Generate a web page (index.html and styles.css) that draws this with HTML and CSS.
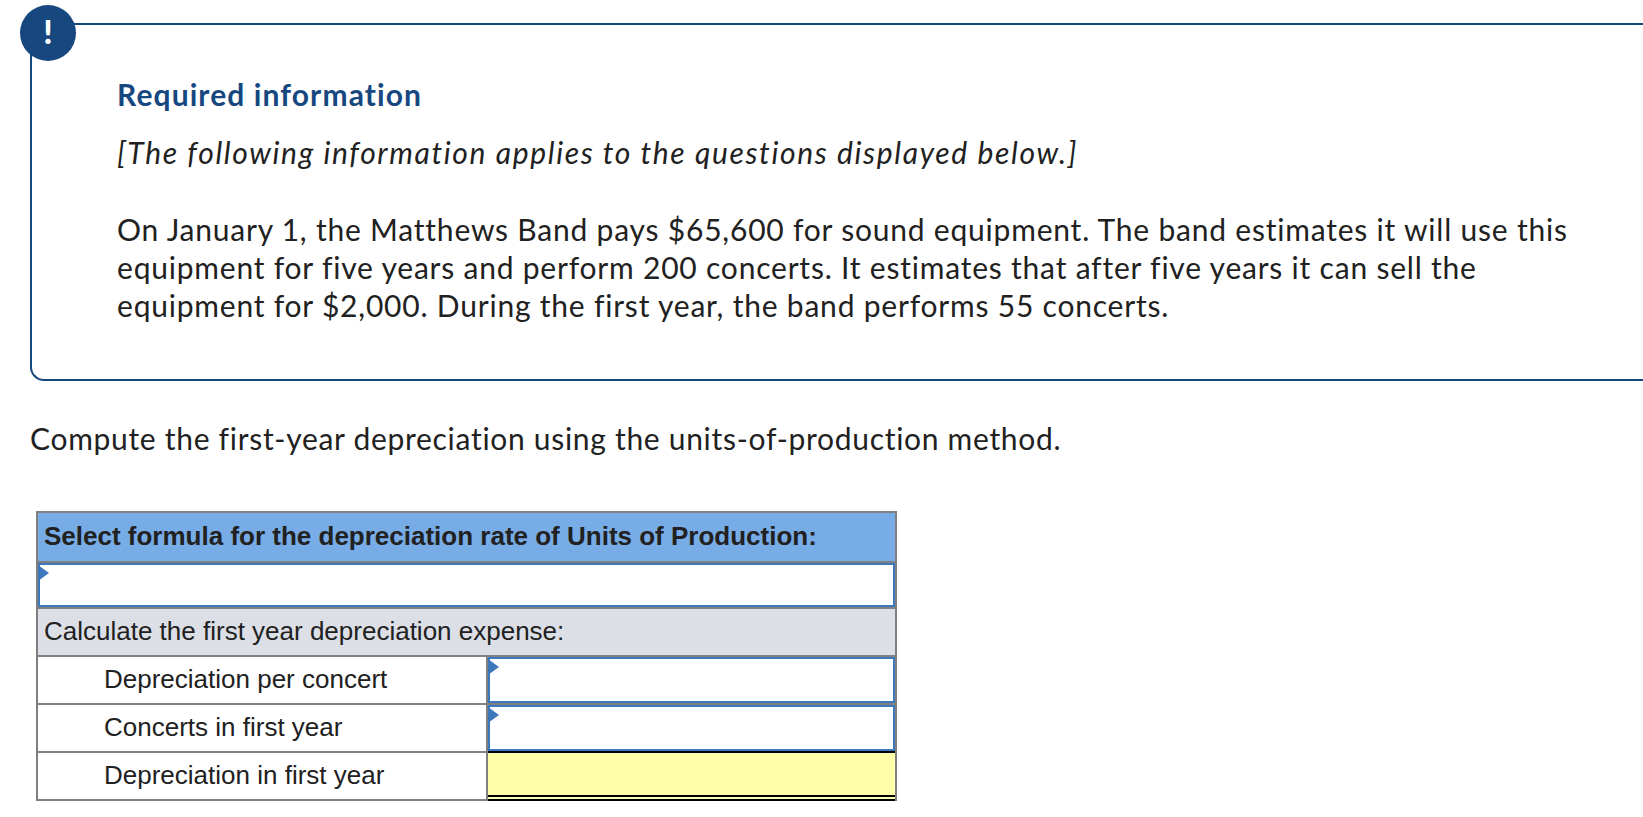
FILE: index.html
```html
<!DOCTYPE html>
<html lang="en">
<head>
<meta charset="utf-8">
<title>Required information</title>
<link rel="stylesheet" href="styles.css">
</head>
<body>
<section class="info">
  <div class="badge">!</div>
  <h2 class="info-title">Required information</h2>
  <p class="info-note">[The following information applies to the questions displayed below.]</p>
  <p class="info-body">On January 1, the Matthews Band pays $65,600 for sound equipment. The band estimates it will use this equipment for five years and perform 200 concerts. It estimates that after five years it can sell the equipment for $2,000. During the first year, the band performs 55 concerts.</p>
</section>
<p class="question">Compute the first-year depreciation using the units-of-production method.</p>
<table class="sheet">
  <colgroup><col class="col-label"><col class="col-value"></colgroup>
  <tr class="row-head"><th colspan="2"><span class="cell-text">Select formula for the depreciation rate of Units of Production:</span></th></tr>
  <tr class="row-input-wide"><td colspan="2" class="input"><span class="flag"></span></td></tr>
  <tr class="row-sub"><td colspan="2"><span class="cell-text">Calculate the first year depreciation expense:</span></td></tr>
  <tr class="row"><td class="label"><span class="cell-text">Depreciation per concert</span></td><td class="input"><span class="flag"></span></td></tr>
  <tr class="row"><td class="label"><span class="cell-text">Concerts in first year</span></td><td class="input"><span class="flag"></span></td></tr>
  <tr class="row"><td class="label"><span class="cell-text">Depreciation in first year</span></td><td class="total"></td></tr>
</table>
</body>
</html>
```
FILE: styles.css
```css
html, body {
  margin: 0;
  padding: 0;
  background: #fff;
  overflow: hidden;
}
body {
  height: 817px;
  font-family: "Lato", "Open Sans", sans-serif;
  font-variant-ligatures: none;
  color: #212121;
}
.info {
  position: relative;
  box-sizing: border-box;
  height: 358px;
  margin: 23px 0 0 30px;
  padding: 50px 40px 0 85px;
  border: 2px solid #17477f;
  border-right: 0;
  border-radius: 0 0 0 14px;
}
.badge {
  position: absolute;
  left: -12px;
  top: -20px;
  width: 56px;
  height: 56px;
  border-radius: 50%;
  background: #17477f;
  color: #fff;
  font-size: 33px;
  font-weight: 900;
  line-height: 52px;
  text-align: center;
}
.info-title {
  margin: 0;
  font-size: 30px;
  line-height: 38px;
  font-weight: 700;
  letter-spacing: 1.1px;
  color: #17477f;
}
.info-note {
  margin: 20px 0 0;
  font-size: 30px;
  line-height: 38px;
  font-style: italic;
  letter-spacing: 1.65px;
}
.info-body {
  margin: 39px 0 0;
  font-size: 30px;
  line-height: 38px;
  letter-spacing: 0.79px;
}
.question {
  margin: 38px 0 0 30px;
  font-size: 30px;
  line-height: 38px;
  letter-spacing: 0.7px;
}
.sheet {
  margin: 54px 0 0 36px;
  width: 861px;
  table-layout: fixed;
  border-collapse: collapse;
  font-family: "Liberation Sans", Arial, sans-serif;
  font-size: 26px;
}
.sheet th, .sheet td {
  border: 2px solid #808080;
  padding: 0 0 0 6px;
  text-align: left;
  box-sizing: border-box;
}
.cell-text {
  display: block;
  margin-top: -2px;
}
.col-label { width: 450px; }
.row-head th {
  height: 50px;
  background: #78ace6;
  font-weight: 700;
}
.row-input-wide td { height: 46px; }
.row-sub td {
  height: 48px;
  background: #dcdfe6;
}
.row td { height: 48px; }
.sheet td.label { padding-left: 66px; }
.sheet td.input {
  position: relative;
  padding: 0;
  background: #fff;
  box-shadow: inset 0 0 0 2px #3d78bd;
}
.flag {
  position: absolute;
  left: 0;
  top: 2px;
  width: 11px;
  height: 16px;
  background: #3d78bd;
  clip-path: polygon(0 0, 100% 50%, 0 100%);
}
.sheet td.total {
  position: relative;
  padding: 0;
  background: #ffffaa;
}
.sheet td.total::before,
.sheet td.total::after {
  content: "";
  position: absolute;
  left: 0;
  right: 0;
  background: #000;
}
.sheet td.total::before {
  top: -2px;
  height: 2px;
}
.sheet td.total::after {
  bottom: -2px;
  height: 2px;
  box-shadow: 0 -4px 0 #000, 0 -2px 0 #ffffaa;
}
```
